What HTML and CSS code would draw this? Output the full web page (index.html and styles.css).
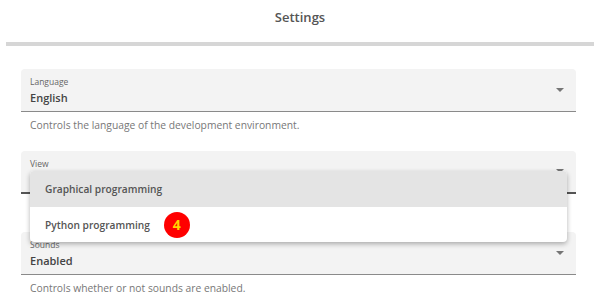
FILE: index.html
```
<!DOCTYPE html>
<html>
<head>
<meta charset="utf-8">
<link rel="stylesheet" href="styles.css">
</head>
<body>
<div class="page">
  <header class="header">Settings</header>
  <div class="bar"></div>
  <main class="content">
    <section class="setting">
      <div class="field">
        <div class="field-text">
          <span class="label">Language</span>
          <span class="value">English</span>
        </div>
        <span class="arrow"></span>
      </div>
      <p class="helper">Controls the language of the development environment.</p>
    </section>
    <section class="setting setting-open">
      <div class="field field-active">
        <div class="field-text">
          <span class="label">View</span>
          <span class="value">&nbsp;</span>
        </div>
        <span class="arrow"></span>
      </div>
      <ul class="menu">
        <li class="menu-item selected">Graphical programming</li>
        <li class="menu-item">Python programming <span class="badge">4</span></li>
      </ul>
    </section>
    <section class="setting">
      <div class="field">
        <div class="field-text">
          <span class="label">Sounds</span>
          <span class="value">Enabled</span>
        </div>
        <span class="arrow"></span>
      </div>
      <p class="helper">Controls whether or not sounds are enabled.</p>
    </section>
  </main>
</div>
</body>
</html>
```
FILE: styles.css
```
* { box-sizing: border-box; }
html, body { margin: 0; padding: 0; background: #fff; }
body { font-family: "Open Sans", "Noto Sans", sans-serif; color: #333; }
.page { width: 600px; height: 305px; overflow: hidden; }
.header {
  height: 42px; display: flex; align-items: center; justify-content: center;
  font-size: 13px; font-weight: 600; color: #555; padding-bottom: 8px;
}
.bar { height: 4px; margin: 0 6px; background: #d6d6d6; }
.content { padding: 23px 24px 0 21px; }
.setting { position: relative; }
.field {
  height: 43px; background: #f3f3f3; border-radius: 4px 4px 0 0;
  border-bottom: 1px solid #8a8a8a;
  display: flex; align-items: center; justify-content: space-between;
  padding: 0 12px 0 9px;
}
.field-active { border-bottom: 2px solid #555; }
.field-text { display: flex; flex-direction: column; padding-top: 2px; }
.label { font-size: 8.5px; color: #666; line-height: 12px; }
.value { font-size: 11px; font-weight: 600; color: #444; line-height: 16px; margin-top: 2px; }
.arrow {
  width: 0; height: 0; border-left: 4.5px solid transparent; border-right: 4.5px solid transparent;
  border-top: 4.5px solid #757575; margin-top: -1px;
}
.helper { margin: 0; height: 39px; padding: 6px 0 0 9px; font-size: 10.3px; color: #777; }
.setting-open { height: 81px; z-index: 2; }
.menu {
  position: absolute; left: 9px; right: 9px; top: 20px; margin: 0; padding: 0; list-style: none;
  background: #fff; border-radius: 4px; box-shadow: 0 2px 5px rgba(0,0,0,0.3); overflow: hidden;
  z-index: 5;
}
.menu-item {
  height: 35px; display: flex; align-items: center; padding-left: 15px;
  font-size: 10.2px; font-weight: 600; color: #555;
}
.menu-item.selected { background: #e4e4e4; height: 36px; }
.badge {
  display: inline-flex; align-items: center; justify-content: center;
  width: 26px; height: 26px; border-radius: 50%; background: #f00; color: #ffd400;
  font-size: 14px; font-weight: 700; margin-left: 14px;
}
```
